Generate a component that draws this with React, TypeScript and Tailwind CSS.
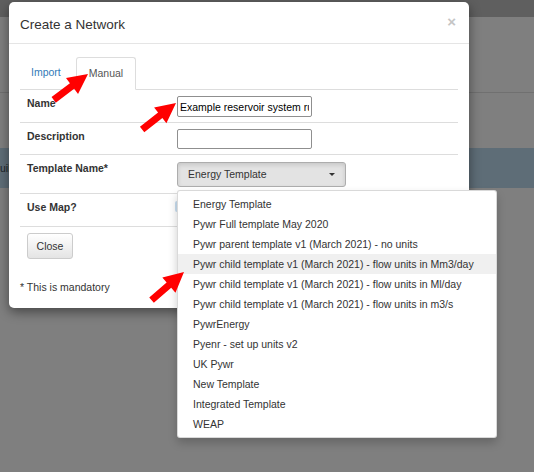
const templates = [
  "Energy Template",
  "Pywr Full template May 2020",
  "Pywr parent template v1 (March 2021) - no units",
  "Pywr child template v1 (March 2021) - flow units in Mm3/day",
  "Pywr child template v1 (March 2021) - flow units in Ml/day",
  "Pywr child template v1 (March 2021) - flow units in m3/s",
  "PywrEnergy",
  "Pyenr - set up units v2",
  "UK Pywr",
  "New Template",
  "Integrated Template",
  "WEAP",
];

const arrows = [
  { x: 88, y: 74, angle: -37 },
  { x: 176, y: 103, angle: -38 },
  { x: 184, y: 272, angle: -41 },
];

function Arrows() {
  return (
    <svg className="absolute inset-0 z-20 pointer-events-none" width={534} height={472}>
      {arrows.map((a, i) => (
        <polygon
          key={i}
          points="0,0 -20,-10 -20,-3.5 -43,-3.5 -43,3.5 -20,3.5 -20,10"
          fill="#ff0000"
          transform={`translate(${a.x} ${a.y}) rotate(${a.angle})`}
        />
      ))}
    </svg>
  );
}

function TemplateSelect() {
  return (
    <div className="relative">
      <div className="mt-px flex items-center justify-between w-[169px] h-[25px] pl-[10px] pr-[10px] bg-[#e3e3e3] border border-[#adadad] rounded-[3px] shadow-[inset_0_2px_4px_rgba(0,0,0,0.125)] text-[#333]">
        <span>Energy Template</span>
        <span className="w-0 h-0 border-x-[3px] border-x-transparent border-t-[3px] border-t-[#333]" />
      </div>
      <ul className="absolute left-0 top-full mt-[3px] w-[320px] pt-[3px] pb-[3px] bg-white border border-[rgba(0,0,0,0.15)] rounded-[3px] shadow-[0_5px_10px_rgba(0,0,0,0.2)] z-10">
        {templates.map((t, i) => (
          <li
            key={t}
            className={`h-[20px] leading-[20px] pl-[15px] text-[#333] whitespace-nowrap ${
              i === 3 ? "bg-[#f0f0f0]" : ""
            }`}
          >
            {t}
          </li>
        ))}
      </ul>
    </div>
  );
}

function Row({
  label,
  height,
  children,
}: {
  label: string;
  height: string;
  children?: React.ReactNode;
}) {
  return (
    <div className={`flex border-b border-[#ddd] ${height}`}>
      <div className="w-[157px] pl-[7px] pt-[6px] font-bold text-[#333]">{label}</div>
      <div className="pt-[6px]">{children}</div>
    </div>
  );
}

export default function App() {
  return (
    <div className="relative w-[534px] h-[472px] overflow-hidden bg-[#7f7f7f] font-['Liberation_Sans',Arial,sans-serif] text-[10.5px] leading-[15px]">
      {/* page behind the backdrop */}
      <div className="h-[17px] bg-[#5f5f5f]" />
      <div className="h-[75px]" />
      <div className="h-px bg-[#707070]" />
      <div className="h-[55px]" />
      <div className="h-[40px] bg-[#5e6d77] flex items-center">
        <span className="text-[#1c2328]">uild</span>
      </div>

      {/* modal */}
      <div className="absolute left-[9px] top-[2px] w-[460px] bg-white rounded-[5px] shadow-[0_4px_12px_rgba(0,0,0,0.45)]">
        <div className="h-[42px] flex items-center justify-between pl-[11px] pr-[13px] pt-[3px] border-b border-[#e5e5e5]">
          <h4 className="text-[13.5px] text-[#333]">Create a Network</h4>
          <span className="-mt-[6px] text-[15px] font-bold text-[#c5c5c5]">×</span>
        </div>

        <div className="px-[11px] pt-[13px] pb-[13px]">
          <div className="flex border-b border-[#ddd] h-[33px]">
            <div className="px-[11px] py-[8px] mr-[4px] text-[#337ab7]">Import</div>
            <div className="px-[12px] py-[8px] -mb-px border border-[#ddd] border-b-white rounded-t-[3px] bg-white text-[#555]">
              Manual
            </div>
          </div>

          <Row label="Name" height="h-[33px]">
            <input
              readOnly
              defaultValue="Example reservoir system run"
              className="w-[135px] h-[21px] px-[2px] border border-[#8f8f8f] rounded-[2px] text-black outline-none"
            />
          </Row>
          <Row label="Description" height="h-[32px]">
            <input
              readOnly
              className="w-[135px] h-[20px] px-[2px] border border-[#8f8f8f] rounded-[2px] outline-none"
            />
          </Row>
          <Row label="Template Name*" height="h-[39px]">
            <TemplateSelect />
          </Row>
          <Row label="Use Map?" height="h-[33px]">
            <div className="-ml-[2px] w-[40px] h-[11px] mt-[1px] bg-[#c9def0] rounded-[2px]" />
          </Row>

          <button className="mt-[6px] ml-[7px] w-[46px] h-[26px] border border-[#ccc] rounded-[3px] bg-linear-to-b from-white to-[#e4e4e4] text-[#333]">
            Close
          </button>

          <p className="mt-[21px] text-[#333]">* This is mandatory</p>
        </div>
      </div>

      <Arrows />
    </div>
  );
}
